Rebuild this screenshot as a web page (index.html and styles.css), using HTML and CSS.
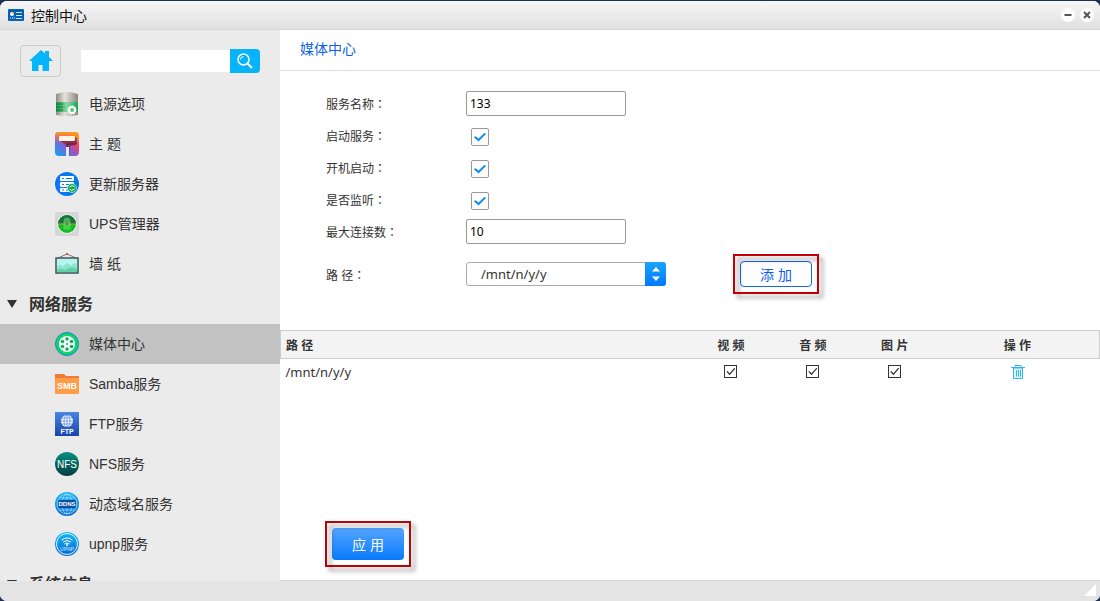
FILE: index.html
```html
<!DOCTYPE html>
<html lang="zh-CN">
<head>
  <meta charset="UTF-8" />
  <meta name="viewport" content="width=device-width, initial-scale=1.0" />
  <title>控制中心</title>
  <link rel="stylesheet" href="styles.css">
</head>
<body>
  <div class="window">
    <header class="titlebar">
      <svg class="app-icon" viewBox="0 0 16 12">
        <rect width="16" height="12" rx="1" fill="#0560b4"/>
        <circle cx="4" cy="5" r="2" fill="#fff"/>
        <path d="M4 5V3a2 2 0 0 1 2 2z" fill="#ffc20e"/>
        <path d="M8 3.5h6M8 6.5h6M8 9.5h6" stroke="#cfe6ff"/>
        <path d="M2 9h5" stroke="#fff" stroke-dasharray="1 1"/>
      </svg>
      <h1>控制中心</h1>
      <button class="win-btn" aria-label="最小化"><svg viewBox="0 0 14 14"><path d="M3.500 7h7" stroke="#555" stroke-width="2"/></svg></button>
      <button class="win-btn" aria-label="关闭"><svg viewBox="0 0 14 14"><path d="M4 4l6 6M10 4l-6 6" stroke="#555" stroke-width="2"/></svg></button>
    </header>

    <div class="content">
      <aside class="sidebar">
        <div class="tools">
          <button class="home" aria-label="主页">
            <svg viewBox="0 0 24 22"><path d="M12 0L0 11h3v10h6.500v-6h4v6H20V11h4l-4-4V1h-4v2.500z" fill="#06b4fb"/></svg>
          </button>
          <form class="search">
            <input type="text" aria-label="搜索">
            <button type="button" aria-label="搜索">
              <svg viewBox="0 0 16 16" fill="none" stroke="#fff"><circle cx="6.500" cy="6.500" r="5.500" stroke-width="1.500"/><path d="M3.500 6.500a3 3 0 0 1 3-3"/><path d="M10.500 10.500l4.500 4.500" stroke-width="2"/></svg>
            </button>
          </form>
        </div>

        <nav class="menu">
          <a href="#" class="item">
            <svg viewBox="0 0 24 24">
              <defs>
                <linearGradient id="metal"><stop offset="0" stop-color="#8e8a84"/><stop offset=".4" stop-color="#e6e2dc"/><stop offset="1" stop-color="#8b857e"/></linearGradient>
                <linearGradient id="cell"><stop offset="0" stop-color="#159447"/><stop offset=".5" stop-color="#83dca4"/><stop offset="1" stop-color="#1ba254"/></linearGradient>
              </defs>
              <path d="M1 2Q12-2 23 2v21Q12 25 1 23z" fill="url(#metal)"/>
              <path d="M1 10h22v10H1z" fill="url(#cell)"/>
              <path d="M1 12h7M1 15h7M1 18h7" stroke="#0c7838"/>
              <circle cx="17" cy="18" r="3" fill="none" stroke="#fff" stroke-width="2"/>
              <circle cx="17" cy="18" r="4" fill="none" stroke="#fff" stroke-dasharray="2 1"/>
            </svg>
            <span>电源选项</span>
          </a>
          <a href="#" class="item">
            <svg viewBox="0 0 24 24">
              <defs>
                <linearGradient id="paint" x1="0" y1="1" x2="1" y2="0"><stop offset="0" stop-color="#00adf5"/><stop offset=".4" stop-color="#7c62d8"/><stop offset=".7" stop-color="#f33b68"/><stop offset="1" stop-color="#ffcf18"/></linearGradient>
                <linearGradient id="warm" x2="0" y2="1"><stop offset="0" stop-color="#ff9d1c"/><stop offset=".5" stop-color="#ff7a3c" stop-opacity="0"/></linearGradient>
                <linearGradient id="shade" x2="0" y2="1"><stop offset="0" stop-color="#9b2530"/><stop offset="1" stop-color="#36378f" stop-opacity=".3"/></linearGradient>
              </defs>
              <rect width="24" height="24" rx="4" fill="url(#paint)"/>
              <rect width="24" height="24" rx="4" fill="url(#warm)"/>
              <path d="M4 8h17v5l-6 1v10h-4V13z" fill="url(#shade)"/>
              <rect x="4" y="4" width="16" height="5" rx="1" fill="#fff3e8"/>
              <path d="M20 6h1v6h-9v3" fill="none" stroke="#502448"/>
              <rect x="11" y="15" width="3" height="9" fill="#e5ecff"/>
            </svg>
            <span>主 题</span>
          </a>
          <a href="#" class="item">
            <svg viewBox="0 0 24 24">
              <circle cx="12" cy="12" r="12" fill="#0878ef"/>
              <rect x="5" y="4" width="14" height="5" rx="1" fill="#fff"/>
              <rect x="5" y="10" width="14" height="5" rx="1" fill="#fff"/>
              <rect x="5" y="16" width="10" height="4" rx="1" fill="#fff"/>
              <path d="M7 6.500h2M11 6.500h6M7 12.500h2M11 12.500h4M7 18h2M11 18h2" stroke="#0878ef"/>
              <circle cx="17" cy="16" r="4.500" fill="#0cae50" stroke="#e8fff0" stroke-width=".6"/>
              <path d="M19.500 15l-2-1.500-3 1.500M14.500 17l2 1.500 3-1.500" fill="none" stroke="#fff"/>
            </svg>
            <span>更新服务器</span>
          </a>
          <a href="#" class="item">
            <svg viewBox="0 0 24 24">
              <rect width="24" height="24" rx="3" fill="#d6d6d6"/>
              <circle cx="12" cy="12" r="10" fill="#f1f1f1"/>
              <circle cx="12" cy="12" r="9" fill="#10be22"/>
              <path d="M3 12a9 9 0 0 1 18 0z" fill="#18723b"/>
              <path d="M3 12h18" stroke="#d09a35"/>
              <path d="M9 11V9a3 3 0 0 1 6 0v2M9 11h6v6H9z" fill="#5bdd68" stroke="#92d28c" opacity=".6"/>
              <circle cx="12" cy="12" r="1" fill="#765b20"/>
            </svg>
            <span>UPS管理器</span>
          </a>
          <a href="#" class="item">
            <svg viewBox="0 0 24 24">
              <path d="M3 6l9-4 9 4" fill="none" stroke="#9c7065"/>
              <circle cx="12" cy="2" r="1" fill="#a04f47"/>
              <rect x="1" y="6" width="22" height="15" fill="#b9f5f0" stroke="#3d5755" stroke-width="1.500"/>
              <path d="M2 15q3-5 6 0 4-7 8-1 3-5 6-1v7H2z" fill="#8be6cd"/>
              <path d="M2 18q4-3 8 0 6-5 12-1v3H2z" fill="#5fd2ac"/>
            </svg>
            <span>墙 纸</span>
          </a>

          <h2><svg viewBox="0 0 10 8"><path d="M0 0h10L5 8z" fill="#333"/></svg><span>网络服务</span></h2>

          <a href="#" class="item active">
            <svg viewBox="0 0 24 24">
              <circle cx="12" cy="12" r="11.500" fill="#0bd36e" stroke="#1788c8"/>
              <circle cx="12" cy="12" r="8" fill="#fff"/>
              <g fill="#14ad5d"><circle cx="12" cy="12" r="1"/><circle cx="12" cy="7" r="1.800"/><circle cx="16.500" cy="9.500" r="1.800"/><circle cx="16.500" cy="14.500" r="1.800"/><circle cx="12" cy="17" r="1.800"/><circle cx="7.500" cy="14.500" r="1.800"/><circle cx="7.500" cy="9.500" r="1.800"/></g>
            </svg>
            <span>媒体中心</span>
          </a>
          <a href="#" class="item">
            <svg viewBox="0 0 24 24">
              <path d="M0 2h9l2 2h13v6H0z" fill="#ef7b3b"/>
              <rect y="6" width="24" height="16" rx="1" fill="#ff9c45"/>
              <text x="12" y="17" font-size="9" font-weight="bold" fill="#fff" text-anchor="middle">SMB</text>
            </svg>
            <span>Samba服务</span>
          </a>
          <a href="#" class="item">
            <svg viewBox="0 0 24 24">
              <defs><linearGradient id="ftp" x2="0" y2="1"><stop offset="0" stop-color="#4a86e2"/><stop offset="1" stop-color="#1745aa"/></linearGradient></defs>
              <path d="M0 0h24v24H0z" fill="url(#ftp)"/>
              <circle cx="12" cy="9" r="6" fill="#fff"/>
              <path d="M6 9h12M7 6h10M7 12h10M12 3v12" stroke="#4e83d8" stroke-width=".7"/>
              <ellipse cx="12" cy="9" rx="3" ry="6" fill="none" stroke="#4e83d8" stroke-width=".7"/>
              <text x="12" y="22" font-size="7" font-weight="bold" fill="#fff" text-anchor="middle">FTP</text>
            </svg>
            <span>FTP服务</span>
          </a>
          <a href="#" class="item">
            <svg viewBox="0 0 24 24">
              <defs><linearGradient id="nfs" x2="0" y2="1"><stop offset="0" stop-color="#079080"/><stop offset="1" stop-color="#043d42"/></linearGradient></defs>
              <circle cx="12" cy="12" r="12" fill="url(#nfs)"/>
              <text x="12" y="16" font-size="10" fill="#fff" text-anchor="middle">NFS</text>
            </svg>
            <span>NFS服务</span>
          </a>
          <a href="#" class="item">
            <svg viewBox="0 0 24 24">
              <defs><linearGradient id="sky" x2="0" y2="1"><stop offset="0" stop-color="#12b9f4"/><stop offset="1" stop-color="#0865d5"/></linearGradient></defs>
              <circle cx="12" cy="12" r="12" fill="url(#sky)"/>
              <g fill="none" stroke="#9edcff" stroke-width=".8"><circle cx="12" cy="12" r="10"/><ellipse cx="12" cy="12" rx="5" ry="10"/><path d="M12 2v20M4 6h16M4 18h16"/></g>
              <rect x="3" y="8" width="18" height="8" rx="2" fill="#07519e"/>
              <text x="12" y="14" font-size="6" font-weight="bold" fill="#fff" text-anchor="middle">DDNS</text>
            </svg>
            <span>动态域名服务</span>
          </a>
          <a href="#" class="item">
            <svg viewBox="0 0 24 24">
              <circle cx="12" cy="12" r="12" fill="url(#sky)"/>
              <circle cx="12" cy="12" r="10.500" fill="none" stroke="#e5f6ff"/>
              <path d="M6.500 8q5.500-4 11 0M8 10q4-3 8 0M9.500 12q2.500-2 5 0" fill="none" stroke="#fff"/>
              <circle cx="12" cy="13" r="1" fill="#fff"/>
              <text x="12" y="19" font-size="5" fill="#d5edff" text-anchor="middle">UPNP</text>
            </svg>
            <span>upnp服务</span>
          </a>

          <h2><svg viewBox="0 0 10 8"><path d="M0 0h10L5 8z" fill="#333"/></svg><span>系统信息</span></h2>
        </nav>
      </aside>

      <main class="panel">
        <h2 class="panel-title">媒体中心</h2>

        <form class="settings">
          <div class="row">
            <label for="serviceName">服务名称<span class="colon" lang="zh-TW">：</span></label>
            <input type="text" id="serviceName" value="133">
          </div>
          <div class="row">
            <label for="enable">启动服务<span class="colon" lang="zh-TW">：</span></label>
            <input type="checkbox" id="enable" checked>
          </div>
          <div class="row">
            <label for="autostart">开机启动<span class="colon" lang="zh-TW">：</span></label>
            <input type="checkbox" id="autostart" checked>
          </div>
          <div class="row">
            <label for="listen">是否监听<span class="colon" lang="zh-TW">：</span></label>
            <input type="checkbox" id="listen" checked>
          </div>
          <div class="row">
            <label for="maxConn">最大连接数<span class="colon" lang="zh-TW">：</span></label>
            <input type="text" id="maxConn" value="10">
          </div>
          <div class="row path-row">
            <label for="path">路 径<span class="colon" lang="zh-TW">：</span></label>
            <div class="select">
              <select id="path"><option>/mnt/n/y/y</option></select>
              <svg viewBox="0 0 21 24"><path d="M7 9.500h8L11 5zM7 14.500h8L11 19z" fill="#fff"/></svg>
            </div>
            <div class="highlight"><button type="button" class="btn-add">添 加</button></div>
          </div>
        </form>

        <table class="paths">
          <thead>
            <tr><th>路 径</th><th>视 频</th><th>音 频</th><th>图 片</th><th>操 作</th></tr>
          </thead>
          <tbody>
            <tr>
              <td>/mnt/n/y/y</td>
              <td><input type="checkbox" aria-label="视频" checked></td>
              <td><input type="checkbox" aria-label="音频" checked></td>
              <td><input type="checkbox" aria-label="图片" checked></td>
              <td>
                <button class="delete" aria-label="删除">
                  <svg viewBox="0 0 14 14" fill="none" stroke="#35b5ef"><path d="M2.500 3v10.500h9V3z" fill="#d9f2fd"/><path d="M0 2.500h14M4 2.500v-2h6v2M5.500 5v6.500M7.500 5v6.500M9.500 5v6.500"/></svg>
                </button>
              </td>
            </tr>
          </tbody>
        </table>

        <div class="actions">
          <div class="highlight"><button type="button" class="btn-apply">应 用</button></div>
        </div>
      </main>
    </div>

    <footer class="statusbar">
      <svg viewBox="0 0 12 12"><path d="M12 0v12H0z" fill="#fff"/></svg>
    </footer>
  </div>
</body>
</html>
```
FILE: styles.css
```css
:root {
  --grey: #ebebeb;
  --text: #333;
  --blue: #0f5fe8;
  --cyan: #06b4fb;
}
* {
  box-sizing: border-box;
}
body {
  margin: 0;
  padding-top: 1px;
  height: 100vh;
  overflow: hidden;
  background: #1d2f52;
  color: var(--text);
  font-family: "Liberation Sans", "Noto Sans CJK SC", sans-serif;
  font-size: 14px;
}
h1, h2 {
  margin: 0;
}
button, input, select {
  font: inherit;
  margin: 0;
  padding: 0;
}
button {
  border: none;
  cursor: pointer;
}
svg {
  display: block;
  flex: none;
}
.window {
  display: flex;
  flex-direction: column;
  height: 100%;
  border-radius: 7px;
  overflow: hidden;
  background: #fff;
}

/* Title bar */
.titlebar {
  display: flex;
  align-items: center;
  gap: 5px;
  height: 29px;
  padding: 0 6px 0 8px;
  background: linear-gradient(#f6f6f6, #e0e0e0);
  border-bottom: 1px solid #d6d6d6;
}
.titlebar h1 {
  flex: 1;
  margin-left: 2px;
  font-size: 14px;
  font-weight: normal;
  color: #111;
}
.app-icon {
  width: 16px;
  height: 12px;
}
.win-btn {
  width: 14px;
  height: 14px;
  border-radius: 50%;
  background: #fff;
}

/* Sidebar */
.content {
  display: flex;
  flex: 1;
  min-height: 0;
}
.sidebar {
  flex: none;
  width: 280px;
  overflow: hidden;
  background: var(--grey);
}
.tools {
  display: flex;
  align-items: center;
  gap: 20px;
  height: 54px;
  padding: 8px 20px 0;
}
.home {
  display: flex;
  flex: none;
  align-items: center;
  justify-content: center;
  width: 41px;
  height: 32px;
  border: 1px solid #cfcac6;
  border-radius: 4px;
  background: none;
}
.home svg {
  width: 24px;
  height: 22px;
}
.search {
  display: flex;
  flex: 1;
  align-items: center;
  min-width: 0;
}
.search input {
  flex: 1;
  min-width: 0;
  height: 22px;
  border: none;
  background: #fff;
}
.search button {
  display: flex;
  flex: none;
  align-items: center;
  justify-content: center;
  width: 30px;
  height: 24px;
  border-radius: 0 4px 4px 0;
  background: var(--cyan);
}
.search svg {
  width: 16px;
  height: 16px;
}
.item {
  display: flex;
  align-items: center;
  gap: 10px;
  height: 40px;
  padding-left: 55px;
  color: var(--text);
  text-decoration: none;
}
.item.active {
  background: #c2c2c2;
}
.item svg {
  width: 24px;
  height: 24px;
}
.menu span {
  padding-bottom: 2px;
}
.menu h2 {
  display: flex;
  align-items: center;
  gap: 12px;
  height: 40px;
  padding-left: 7px;
  font-size: 16px;
}
.menu h2 svg {
  width: 10px;
  height: 8px;
}

/* Main panel */
.panel {
  display: flex;
  flex: 1;
  flex-direction: column;
  min-width: 0;
  border-bottom: 1px solid #d6d6d6;
}
.panel-title {
  height: 41px;
  padding-left: 20px;
  border-bottom: 1px solid #dedede;
  color: var(--blue);
  font-size: 14px;
  font-weight: normal;
  line-height: 38px;
}
.settings {
  padding: 16px 0 40px 46px;
  font-size: 12px;
}
.row {
  display: flex;
  align-items: center;
  height: 32px;
}
.row label {
  width: 140px;
}
.colon {
  font-family: "Noto Sans CJK TC", sans-serif;
}
.row input[type="text"] {
  width: 160px;
  height: 25px;
  padding: 0 3px;
  border: 1px solid #999;
  border-radius: 2px;
  color: #000;
  font-family: "Noto Sans", sans-serif;
}
input[type="checkbox"] {
  appearance: none;
  display: grid;
  place-items: center;
}
input[type="checkbox"]:checked::before {
  content: "";
  background: currentColor;
}
.row input[type="checkbox"] {
  width: 18px;
  height: 18px;
  margin: 4px 0 0 5px;
  border: 1px solid #999;
  border-radius: 2px;
  color: #1b8fe0;
}
.row input[type="checkbox"]:checked::before {
  width: 12px;
  height: 10px;
  clip-path: polygon(0 55%, 12% 40%, 38% 66%, 88% 8%, 100% 20%, 38% 95%);
}
.path-row {
  margin-top: 11px;
}
.select {
  display: grid;
  width: 200px;
  height: 24px;
}
.select select {
  grid-area: 1 / 1;
  appearance: none;
  padding-left: 14px;
  border: 1px solid #aaa;
  border-radius: 3px;
  background: #fff;
  color: var(--text);
  font-family: "Noto Sans", sans-serif;
  font-size: 13px;
}
.select svg {
  grid-area: 1 / 1;
  justify-self: end;
  width: 21px;
  height: 24px;
  border-radius: 0 3px 3px 0;
  background: linear-gradient(#18a4ff, #0478ff);
  pointer-events: none;
}

/* Red frame drawn over an important button */
.highlight {
  position: relative;
  width: 72px;
}
.highlight::after {
  content: "";
  position: absolute;
  inset: -7px;
  border: 2px solid #c00000;
  filter: drop-shadow(4px 4px 2px rgba(0, 0, 0, 0.4));
  pointer-events: none;
}
.highlight button {
  display: block;
  width: 100%;
  border-radius: 4px;
  font-size: 14px;
}
.path-row .highlight {
  margin-left: 74px;
}
.btn-add {
  height: 26px;
  border: 1px solid #1468ee;
  background: #fff;
  color: #0d5cf5;
}
.btn-apply {
  height: 32px;
  background: linear-gradient(#56a5ff, #087aff);
  color: #fff;
}

/* Path table */
.paths {
  width: 100%;
  table-layout: fixed;
  border-collapse: collapse;
  font-size: 12px;
}
.paths thead tr {
  height: 28px;
  border: 1px solid #ccc;
  background: #f3f3f3;
}
.paths th, .paths td {
  width: 10%;
  padding: 0;
  text-align: center;
}
.paths th:first-child, .paths td:first-child {
  width: 50%;
  padding-left: 5px;
  text-align: left;
}
.paths th:last-child, .paths td:last-child {
  width: 20%;
}
.paths tbody tr {
  height: 26px;
}
.paths td {
  font-family: "Noto Sans", sans-serif;
  font-size: 13px;
}
.paths input[type="checkbox"] {
  width: 13px;
  height: 13px;
  margin: 0 auto;
  border: 1px solid #333;
  color: #333;
}
.paths input[type="checkbox"]:checked::before {
  width: 9px;
  height: 8px;
  clip-path: polygon(0 50%, 10% 40%, 35% 70%, 90% 0, 100% 10%, 35% 95%);
}
.delete {
  display: block;
  margin: 0 auto;
  background: none;
}
.delete svg {
  width: 14px;
  height: 14px;
}
.actions {
  margin-top: auto;
  padding: 0 0 20px 52px;
}

/* Status bar */
.statusbar {
  display: flex;
  align-items: center;
  justify-content: flex-end;
  height: 20px;
  padding: 0 4px 2px;
  background: #e4e4e4;
}
.statusbar svg {
  width: 12px;
  height: 12px;
}
```
